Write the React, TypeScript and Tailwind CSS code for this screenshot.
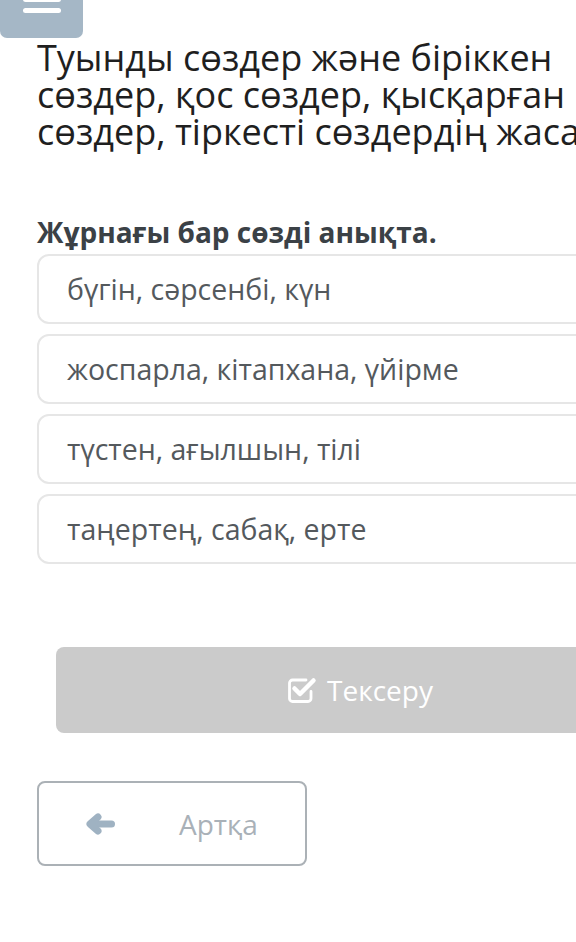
const options = [
  'бүгін, сәрсенбі, күн',
  'жоспарла, кітапхана, үйірме',
  'түстен, ағылшын, тілі',
  'таңертең, сабақ, ерте',
];

function CheckSquareIcon() {
  return (
    <svg width="30" height="28" viewBox="0 0 30 28" fill="none" className="shrink-0">
      {/* open box */}
      <path
        d="M19 4H5.5a3 3 0 0 0-3 3v15.5a3 3 0 0 0 3 3H21a3 3 0 0 0 3-3v-7"
        stroke="white"
        strokeWidth="2.8"
        strokeLinecap="round"
      />
      {/* check mark */}
      <path d="M7.5 12.5l5.5 5.5L26.5 4.5" stroke="white" strokeWidth="4.5" strokeLinecap="round" strokeLinejoin="round" />
    </svg>
  );
}

function BackArrow() {
  return (
    <svg width="30" height="22" viewBox="0 0 30 22" fill="none" className="shrink-0">
      <path d="M6 11h20.5" stroke="#9fb2c2" strokeWidth="7" strokeLinecap="round" />
      <path d="M13 4l-8 7 8 7" stroke="#9fb2c2" strokeWidth="7" strokeLinecap="round" strokeLinejoin="round" />
    </svg>
  );
}

export default function App() {
  return (
    <div className="w-[576px] h-[942px] overflow-hidden bg-white font-['Open_Sans','Noto_Sans',sans-serif]">
      <div className="w-[720px]">
        {/* Menu button, partly scrolled off */}
        <div className="w-[83px] h-[38px] bg-[#a5b7c6] rounded-b-[7px] overflow-hidden flex flex-col items-center gap-[6px]">
          <span className="block w-[38px] h-[5px] bg-white rounded-sm -mt-[3px]" />
          <span className="block w-[38px] h-[5px] bg-white rounded-sm" />
        </div>

        <h1 className="mt-[1px] pl-[37px] text-[36px] leading-[37px] font-normal text-[#1f1f1f] whitespace-nowrap">
          Туынды сөздер және біріккен
          <br />
          сөздер, қос сөздер, қысқарған
          <br />
          сөздер, тіркесті сөздердің жасалуы
        </h1>

        <p className="mt-[66px] pl-[37px] text-[28px] leading-[32px] font-bold text-[#3b4146] whitespace-nowrap">
          Жұрнағы бар сөзді анықта.
        </p>

        <div className="mt-[6px] ml-[37px] w-[620px] flex flex-col gap-[10px]">
          {options.map(opt => (
            <div
              key={opt}
              className="h-[70px] border-2 border-[#e6e6e6] rounded-[12px] flex items-center pl-[28px] text-[28.5px] text-[#54595d] whitespace-nowrap"
            >
              {opt}
            </div>
          ))}
        </div>

        <div className="mt-[83px] ml-[56px] w-[608px] h-[86px] rounded-[8px] bg-[#cbcbcb] flex items-center justify-center gap-[10px]">
          <CheckSquareIcon />
          <span className="text-[28px] text-white">Тексеру</span>
        </div>

        <div className="mt-[48px] ml-[37px] w-[270px] h-[85px] border-2 border-[#abb1b6] rounded-[8px] flex items-center pl-[46px]">
          <BackArrow />
          <span className="ml-[64px] text-[28px] text-[#a9b1b8]">Артқа</span>
        </div>
      </div>
    </div>
  );
}
